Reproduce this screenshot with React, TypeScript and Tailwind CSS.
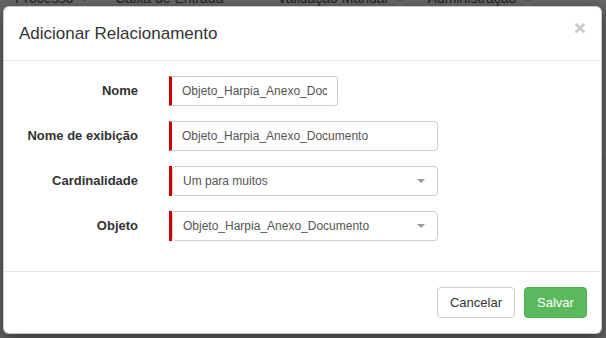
const Caret = () => (
  <span className="ml-1 inline-block h-0 w-0 border-x-[4px] border-t-[4px] border-x-transparent border-t-current align-middle" />
);

const TextField = ({ value, width }: { value: string; width: string }) => (
  <div
    className={`flex h-[30px] items-center rounded-r-[4px] border border-l-[3px] border-[#ccc] border-l-[#cc0000] bg-white px-[10px] text-[12px] text-[#555] ${width}`}
  >
    <span className="overflow-hidden whitespace-nowrap">{value}</span>
  </div>
);

const SelectField = ({ value }: { value: string }) => (
  <div className="flex h-[30px] w-[269px]">
    <div className="w-[3px] bg-[#cc0000]" />
    <div className="flex flex-1 items-center justify-between rounded-[4px] border border-[#ccc] bg-white pl-[10px] pr-[12px] text-[12px] text-[#555]">
      <span className="whitespace-nowrap">{value}</span>
      <span className="h-0 w-0 border-x-[4px] border-t-[4px] border-x-transparent border-t-[#999]" />
    </div>
  </div>
);

const Row = ({ label, children }: { label: string; children: React.ReactNode }) => (
  <div className="flex items-center">
    <label className="w-[134px] text-right text-[13px] font-bold text-[#333]">{label}</label>
    <div className="ml-[31px]">{children}</div>
  </div>
);

const App = () => {
  return (
    <div className="relative h-[338px] w-[606px] overflow-hidden bg-white font-['Liberation_Sans',Arial,sans-serif]">
      {/* page behind the dialog */}
      <nav className="-mt-[12px] flex h-[20px] items-center text-[14px] text-[#555]">
        <span className="ml-[15px]">
          Processo <Caret />
        </span>
        <span className="ml-[26px]">Caixa de Entrada</span>
        <span className="ml-[54px]">
          Validação Manual <Caret />
        </span>
        <span className="ml-[24px]">
          Administração <Caret />
        </span>
      </nav>
      <div className="mt-[150px] border-t border-[#ddd]" />

      <div className="absolute inset-0 bg-black/60 pl-[3px] pt-[6px]">
        <div className="w-[599px] rounded-[6px] border border-black/20 bg-white shadow-[0_5px_15px_rgba(0,0,0,0.5)]">
          <div className="flex h-[54px] items-center justify-between border-b border-[#e5e5e5] pl-[15px] pr-[15px]">
            <h4 className="text-[17px] text-[#333]">Adicionar Relacionamento</h4>
            <span className="-mt-[12px] text-[21px] font-bold leading-none text-[#c8c8c8]">×</span>
          </div>
          <div className="flex flex-col gap-[15px] pb-[30px] pt-[15px]">
            <Row label="Nome">
              <TextField value="Objeto_Harpia_Anexo_Documento" width="w-[169px]" />
            </Row>
            <Row label="Nome de exibição">
              <TextField value="Objeto_Harpia_Anexo_Documento" width="w-[269px]" />
            </Row>
            <Row label="Cardinalidade">
              <SelectField value="Um para muitos" />
            </Row>
            <Row label="Objeto">
              <SelectField value="Objeto_Harpia_Anexo_Documento" />
            </Row>
          </div>
          <div className="flex justify-end gap-[9px] border-t border-[#e5e5e5] px-[14px] py-[15px]">
            <button className="h-[31px] w-[78px] rounded-[4px] border border-[#ccc] bg-white text-[13px] text-[#333]">
              Cancelar
            </button>
            <button className="h-[31px] w-[63px] rounded-[4px] border border-[#4cae4c] bg-[#5cb85c] text-[13px] text-white">
              Salvar
            </button>
          </div>
        </div>
      </div>
    </div>
  );
};

export default App;
